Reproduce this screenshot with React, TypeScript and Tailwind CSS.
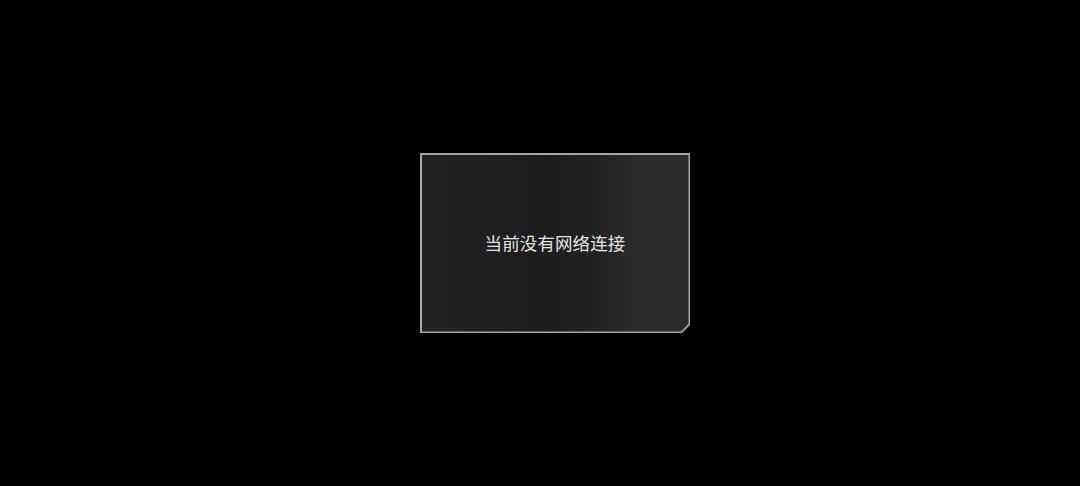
export default function App() {
  return (
    <div className="w-[1080px] h-[486px] bg-black flex items-center justify-center pl-[30px]">
      <div className="relative w-[270px] h-[180px] bg-[#a6a6a6] [clip-path:polygon(0_0,100%_0,100%_calc(100%-8px),calc(100%-8px)_100%,0_100%)] p-[1.5px]">
        <div className="w-full h-full bg-[linear-gradient(90deg,#232323_0%,#1f1f1f_30%,#1c1c1c_48%,#212121_62%,#2a2a2a_80%,#2a2a2a_100%)] [clip-path:polygon(0_0,100%_0,100%_calc(100%-7.4px),calc(100%-7.4px)_100%,0_100%)] flex items-center justify-center">
          <span className="text-[17.5px] leading-none text-[#e4e4e4] tracking-[0.1px] font-normal font-['Noto_Sans_CJK_SC',sans-serif]">
            当前没有网络连接
          </span>
        </div>
      </div>
    </div>
  );
}
